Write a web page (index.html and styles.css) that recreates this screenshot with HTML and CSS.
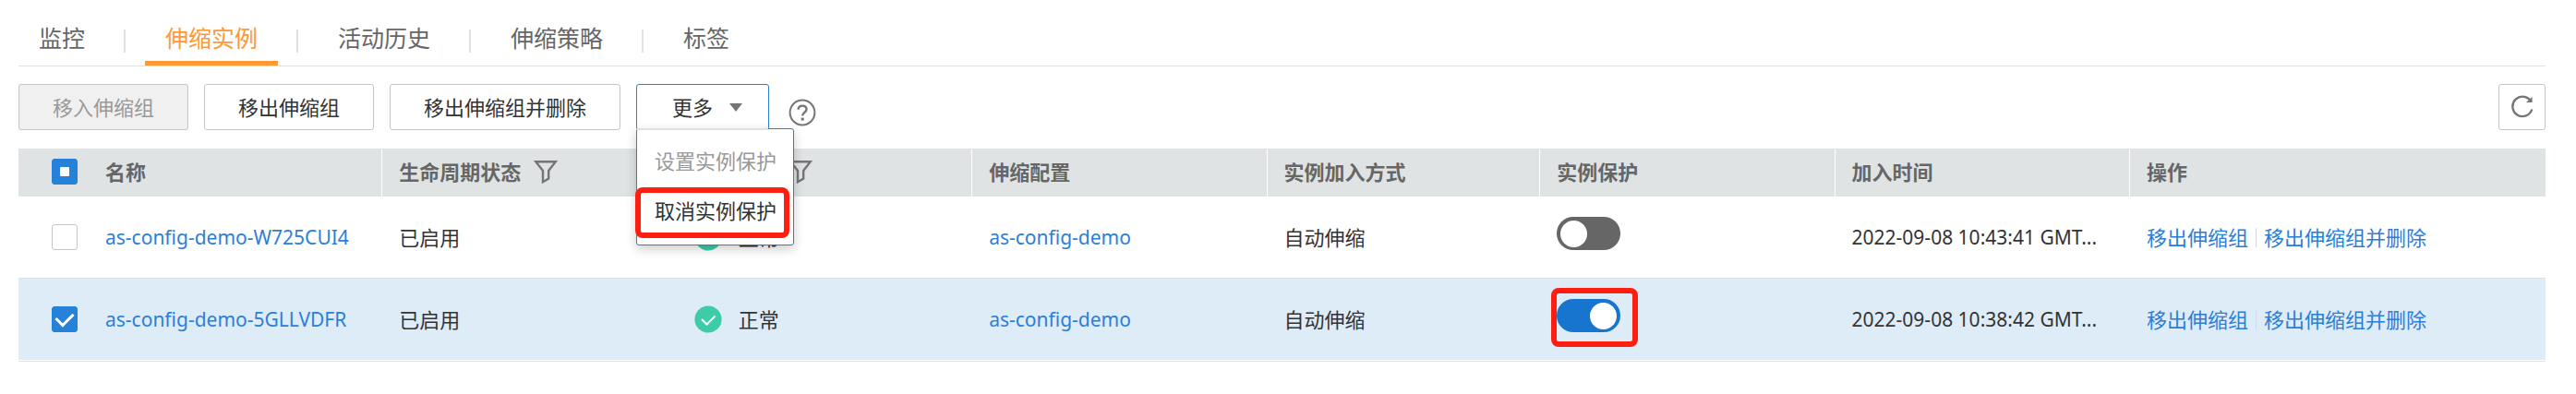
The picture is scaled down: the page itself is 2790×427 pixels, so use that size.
FILE: index.html
```
<!DOCTYPE html>
<html lang="zh-CN">
  <head>
    <meta charset="UTF-8">
    <meta name="viewport" content="width=device-width, initial-scale=1">
    <title>伸缩实例</title>
    <link rel="stylesheet" href="styles.css">
  </head>
  <body>
    <nav class="tabs">
      <a class="tab" href="#monitor">监控</a>
      <a class="tab active" href="#instances">伸缩实例</a>
      <a class="tab" href="#history">活动历史</a>
      <a class="tab" href="#policy">伸缩策略</a>
      <a class="tab" href="#tags">标签</a>
    </nav>

    <div class="toolbar">
      <button class="btn" type="button" disabled>移入伸缩组</button>
      <button class="btn" type="button">移出伸缩组</button>
      <button class="btn" type="button">移出伸缩组并删除</button>
      <div class="dropdown">
        <button class="btn btn-more" type="button" aria-haspopup="true" aria-expanded="true">更多<span class="caret"></span></button>
        <div class="menu">
          <button class="menu-item" type="button" disabled>设置实例保护</button>
          <button class="menu-item" type="button">取消实例保护</button>
          <span class="mark mark-menu"></span>
        </div>
      </div>
      <button class="help" type="button" aria-label="帮助">
        <svg width="30" height="30" viewBox="0 0 30 30" fill="none" stroke="#757575" stroke-width="2">
          <circle cx="15" cy="15" r="13.4"/>
          <path d="M10.6 11.8C10.6 9 12.4 7.6 15 7.6s4.5 1.5 4.5 3.9c0 3.3-4.4 3.5-4.4 7.1" stroke-width="2.4"/>
          <path d="M13.7 20.6h3v3h-3z" fill="#757575" stroke="none"/>
        </svg>
      </button>
      <button class="btn btn-refresh" type="button" aria-label="刷新">
        <svg width="26" height="26" viewBox="0 0 26 26" fill="none" stroke="#757575" stroke-width="2.4">
          <path d="M22.6 7.5A10.7 10.7 0 1 0 23.3 15.5"/>
          <path d="M23.5 2v6h-6.5z" fill="#757575" stroke="none"/>
        </svg>
      </button>
    </div>

    <table class="grid">
      <colgroup>
        <col class="col-check">
        <col class="col-name">
        <col class="col-std">
        <col class="col-std">
        <col class="col-std">
        <col class="col-join">
        <col class="col-std">
        <col class="col-std">
        <col>
      </colgroup>
      <thead>
        <tr>
          <th class="check"><input class="box" id="check-all" type="checkbox" aria-label="全选"></th>
          <th>名称</th>
          <th>
            <span class="head">生命周期状态
              <svg width="26" height="26" viewBox="0 0 26 26" fill="none" stroke="#757575" stroke-width="2.4"><path d="M2.2 2.2h21.6l-7.6 9.8v8.6l-6.2 3.6V12z"/></svg>
            </span>
          </th>
          <th>
            <span class="head">健康状态
              <svg width="26" height="26" viewBox="0 0 26 26" fill="none" stroke="#757575" stroke-width="2.4"><path d="M2.2 2.2h21.6l-7.6 9.8v8.6l-6.2 3.6V12z"/></svg>
            </span>
          </th>
          <th>伸缩配置</th>
          <th>实例加入方式</th>
          <th>实例保护</th>
          <th>加入时间</th>
          <th>操作</th>
        </tr>
      </thead>
      <tbody>
        <tr>
          <td class="check"><input class="box" type="checkbox" aria-label="as-config-demo-W725CUI4"></td>
          <td><a href="#w725cui4">as-config-demo-W725CUI4</a></td>
          <td class="cn">已启用</td>
          <td class="cn">
            <span class="status">
              <svg width="30" height="30" viewBox="0 0 30 30" fill="none"><circle cx="15" cy="15" r="14.6" fill="#3dcca6"/><path d="M8 15l5.5 5.5 9-9" stroke="#fff" stroke-width="2"/></svg>
              正常
            </span>
          </td>
          <td><a href="#config">as-config-demo</a></td>
          <td class="cn">自动伸缩</td>
          <td class="protect"><span class="switch-wrap"><input class="switch" type="checkbox" role="switch" aria-label="实例保护"></span></td>
          <td>2022-09-08 10:43:41 GMT...</td>
          <td class="cn"><span class="actions"><a href="#remove">移出伸缩组</a><a href="#delete">移出伸缩组并删除</a></span></td>
        </tr>
        <tr class="selected">
          <td class="check"><input class="box" type="checkbox" checked aria-label="as-config-demo-5GLLVDFR"></td>
          <td><a href="#5gllvdfr">as-config-demo-5GLLVDFR</a></td>
          <td class="cn">已启用</td>
          <td class="cn">
            <span class="status">
              <svg width="30" height="30" viewBox="0 0 30 30" fill="none"><circle cx="15" cy="15" r="14.6" fill="#3dcca6"/><path d="M8 15l5.5 5.5 9-9" stroke="#fff" stroke-width="2"/></svg>
              正常
            </span>
          </td>
          <td><a href="#config">as-config-demo</a></td>
          <td class="cn">自动伸缩</td>
          <td class="protect"><span class="switch-wrap"><input class="switch" type="checkbox" role="switch" checked aria-label="实例保护"><span class="mark mark-switch"></span></span></td>
          <td>2022-09-08 10:38:42 GMT...</td>
          <td class="cn"><span class="actions"><a href="#remove">移出伸缩组</a><a href="#delete">移出伸缩组并删除</a></span></td>
        </tr>
      </tbody>
    </table>

    <script>
      // only some rows are selected
      document.getElementById('check-all').indeterminate = true;
    </script>
  </body>
</html>
```

FILE: styles.css
```
* { box-sizing: border-box; }
body {
  margin: 0;
  padding: 0 33px 0 20px;
  background: #fff;
  color: #333;
  font: 22px/32px "Noto Sans", "Noto Sans CJK SC", sans-serif;
}
button {
  font: inherit;
  color: inherit;
  margin: 0;
}
a { color: #2b7fd9; text-decoration: none; }
svg { display: block; }

/* tabs */
.tabs {
  display: flex;
  align-items: center;
  height: 72px;
  border-bottom: 1px solid #dfe1e2;
}
.tab {
  display: flex;
  align-items: center;
  height: 100%;
  padding: 16px 22px 0;
  border-bottom: 5px solid transparent;
  color: #666;
  font-size: 25px;
}
.tab.active { color: #ff9933; border-bottom-color: #ff9933; }
.tab + .tab { margin-left: 21px; }
.tab:not(:last-child) { position: relative; margin-right: 22px; }
.tab:not(:last-child)::after {
  content: "";
  position: absolute;
  right: -22px;
  top: 32px;
  width: 2px;
  height: 25px;
  background: #dfe1e2;
}

/* toolbar */
.toolbar {
  display: flex;
  gap: 17px;
  padding: 19px 0 20px;
}
.btn {
  height: 50px;
  padding: 0 36px;
  border: 1px solid #c3c5c6;
  border-radius: 3px;
  background: #fff;
  white-space: nowrap;
}
.btn:disabled { background: #f0f0f0; color: #999; }
.dropdown { position: relative; }
.btn-more {
  display: flex;
  align-items: center;
  gap: 18px;
  padding: 0 28px 0 38px;
  border-color: #2681d9;
}
.caret {
  border: 7px solid transparent;
  border-top: 9px solid #757575;
  border-bottom: 0;
}
.menu {
  position: absolute;
  z-index: 1;
  top: 48px;
  left: 0;
  width: 171px;
  padding: 7px 0 10px;
  border: 1px solid #2681d9;
  border-radius: 3px;
  background: #fff;
  box-shadow: 0 4px 12px rgba(0, 0, 0, .2);
}
.menu::before {
  content: "";
  position: absolute;
  top: -1px;
  left: 0;
  width: 142px;
  height: 2px;
  background: #dfe1e2;
}
.menu-item {
  display: block;
  width: 100%;
  height: 54px;
  padding: 0 0 0 19px;
  border: 0;
  background: none;
  text-align: left;
  white-space: nowrap;
}
.menu-item:disabled { color: #999; }
.help {
  padding: 0;
  margin: 16px 0 0 4px;
  height: 30px;
  border: 0;
  background: none;
}
.btn-refresh {
  display: flex;
  align-items: center;
  justify-content: center;
  width: 51px;
  padding: 0;
  margin-left: auto;
}

/* highlight frames */
.mark {
  position: absolute;
  border: 6px solid #ff1f10;
  border-radius: 8px;
  pointer-events: none;
}
.mark-menu { top: 63px; left: -2px; right: 4px; height: 55px; }
.mark-switch { inset: -12px -19px -16px -6px; }

/* table */
.grid {
  width: 100%;
  table-layout: fixed;
  border-collapse: separate;
  border-spacing: 0;
  border-bottom: 1px solid #dfe1e2;
}
.col-check { width: 76px; }
.col-name { width: 11.63%; }
.col-std { width: 11.67%; }
.col-join { width: 10.8%; }
th, td {
  padding: 0 0 0 18px;
  text-align: left;
  white-space: nowrap;
}
th {
  height: 52px;
  padding-bottom: 2px;
  border-right: 1px solid #fff;
  background: #dfe3e4;
  color: #666;
  font-weight: 700;
}
th:last-child, th.check { border-right: 0; }
td {
  height: 89px;
  border-bottom: 1px solid #dfe1e2;
  font-size: 21px;
}
td.cn { font-size: 22px; }
th.check, td.check { padding-left: 36px; }
.selected td {
  background: #deecf7;
  border-bottom-color: #fff;
}
.head, .status, .actions { display: flex; align-items: center; }
.head { gap: 14px; }
.status { gap: 18px; }
.actions a + a {
  display: flex;
  align-items: center;
}
.actions a + a::before {
  content: "";
  width: 1px;
  height: 21px;
  margin: 0 8px;
  background: #d5dade;
}

.box {
  appearance: none;
  display: flex;
  align-items: center;
  justify-content: center;
  width: 28px;
  height: 28px;
  margin: 0;
  border: 1px solid #c3c5c6;
  border-radius: 3px;
  background: #fff;
}
.box:checked, .box:indeterminate { border-color: #2681d9; background: #2681d9; }
.box:indeterminate::before {
  content: "";
  width: 10px;
  height: 10px;
  border-radius: 1px;
  background: #fff;
}
.box:checked::before {
  content: "";
  width: 15px;
  height: 9px;
  margin-bottom: 5px;
  border: solid #fff;
  border-width: 0 0 3px 3px;
  transform: rotate(-45deg);
}

.protect { padding-bottom: 8px; }
.switch-wrap {
  display: block;
  position: relative;
  width: 69px;
}
.switch {
  appearance: none;
  display: flex;
  align-items: center;
  width: 69px;
  height: 36px;
  margin: 0;
  padding: 0 4px;
  border-radius: 18px;
  background: #666;
}
.switch::before {
  content: "";
  width: 29px;
  height: 29px;
  border-radius: 50%;
  background: #fff;
}
.switch:checked { justify-content: flex-end; background: #1775cf; }
```
